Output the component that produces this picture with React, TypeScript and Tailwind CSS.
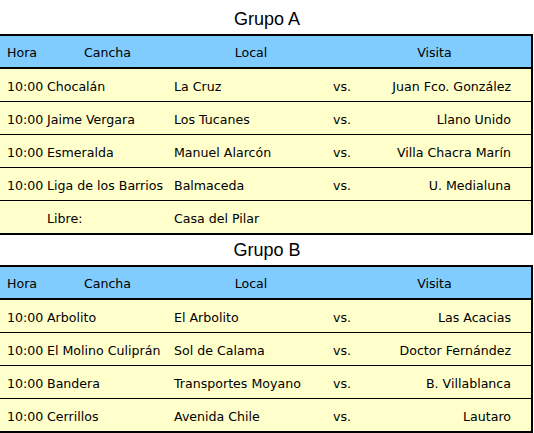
import React from "react";

type Match = { hora: string; cancha: string; local: string; visita: string };

const grupoA: Match[] = [
  { hora: "10:00", cancha: "Chocalán", local: "La Cruz", visita: "Juan Fco. González" },
  { hora: "10:00", cancha: "Jaime Vergara", local: "Los Tucanes", visita: "Llano Unido" },
  { hora: "10:00", cancha: "Esmeralda", local: "Manuel Alarcón", visita: "Villa Chacra Marín" },
  { hora: "10:00", cancha: "Liga de los Barrios", local: "Balmaceda", visita: "U. Medialuna" },
];

const grupoB: Match[] = [
  { hora: "10:00", cancha: "Arbolito", local: "El Arbolito", visita: "Las Acacias" },
  { hora: "10:00", cancha: "El Molino Culiprán", local: "Sol de Calama", visita: "Doctor Fernández" },
  { hora: "10:00", cancha: "Bandera", local: "Transportes Moyano", visita: "B. Villablanca" },
  { hora: "10:00", cancha: "Cerrillos", local: "Avenida Chile", visita: "Lautaro" },
];

const Header = () => (
  <div className="flex h-[33px] pt-[4px] items-center bg-[#80ccff] border-b-2 border-black">
    <div className="w-[44px] pl-[7px]">Hora</div>
    <div className="w-[127px] text-center">Cancha</div>
    <div className="w-[160px] text-center">Local</div>
    <div className="flex-1 text-center pl-[7px]">Visita</div>
  </div>
);

const Row = ({ m, last }: { m: Match; last?: boolean }) => (
  <div
    className={`flex pt-[4px] items-center bg-[#ffffcc] border-black ${
      last ? "h-[34px] border-b-2" : "h-[33px] border-b"
    }`}
  >
    <div className="w-[44px] pl-[7px]">{m.hora}</div>
    <div className="w-[127px] pl-[3px] whitespace-nowrap">{m.cancha}</div>
    <div className="w-[162px] pl-[3px] whitespace-nowrap">{m.local}</div>
    <div className="w-[40px]">vs.</div>
    <div className="flex-1 text-right pr-[20px] whitespace-nowrap">{m.visita}</div>
  </div>
);

const Grupo = ({
  title,
  matches,
  libre,
}: {
  title: string;
  matches: Match[];
  libre?: string;
}) => (
  <>
    <div className="h-[30px] flex items-center justify-center text-[18px] font-['Liberation_Sans',Arial,sans-serif]">
      {title}
    </div>
    <div className="w-[533px] border-t-2 border-r-2 border-black text-[12.6px] font-['DejaVu_Sans',Verdana,sans-serif]">
      <Header />
      {matches.map((m, i) => (
        <Row key={i} m={m} last={!libre && i === matches.length - 1} />
      ))}
      {libre && (
        <div className="flex h-[34px] pt-[4px] items-center bg-[#ffffcc] border-b-2 border-black">
          <div className="w-[44px]" />
          <div className="w-[127px] pl-[3px]">Libre:</div>
          <div className="w-[162px] pl-[3px]">{libre}</div>
        </div>
      )}
    </div>
  </>
);

export default function App() {
  return (
    <div className="w-[534px] h-[433px] overflow-hidden bg-white text-black pt-[4px]">
      <Grupo title="Grupo A" matches={grupoA} libre="Casa del Pilar" />
      <Grupo title="Grupo B" matches={grupoB} />
    </div>
  );
}
